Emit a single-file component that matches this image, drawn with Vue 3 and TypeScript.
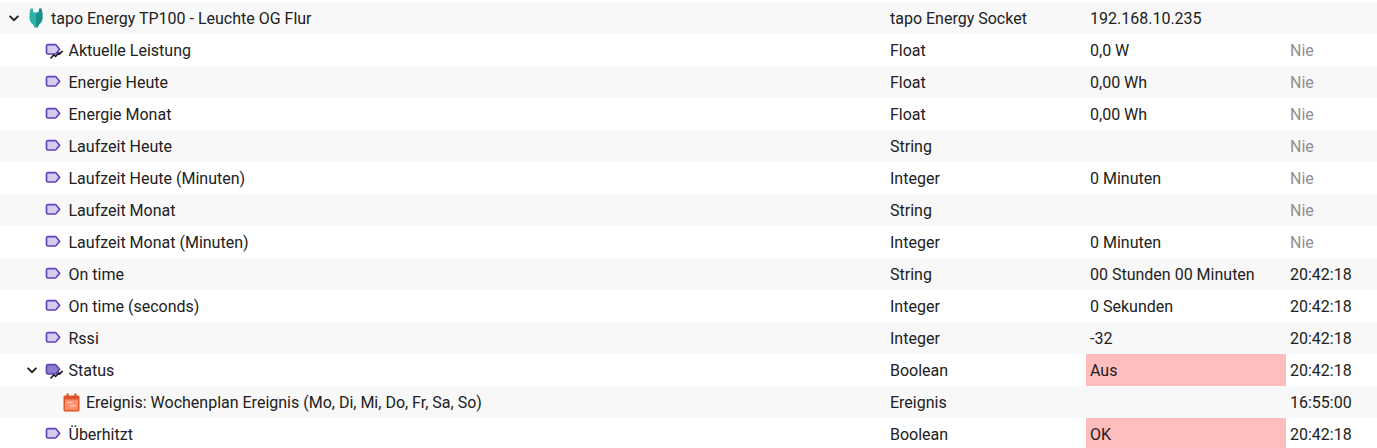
<script setup lang="ts">
interface Row {
  name: string
  type: string
  value: string
  last: string
  depth: number
  icon: 'plug' | 'tag' | 'tagScript' | 'tagScriptDark' | 'calendar'
  chevron?: boolean
  alert?: boolean
  muted?: boolean
}

const rows: Row[] = [
  { name: 'tapo Energy TP100 - Leuchte OG Flur', type: 'tapo Energy Socket', value: '192.168.10.235', last: '', depth: 0, icon: 'plug', chevron: true },
  { name: 'Aktuelle Leistung', type: 'Float', value: '0,0 W', last: 'Nie', depth: 1, icon: 'tagScript', muted: true },
  { name: 'Energie Heute', type: 'Float', value: '0,00 Wh', last: 'Nie', depth: 1, icon: 'tag', muted: true },
  { name: 'Energie Monat', type: 'Float', value: '0,00 Wh', last: 'Nie', depth: 1, icon: 'tag', muted: true },
  { name: 'Laufzeit Heute', type: 'String', value: '', last: 'Nie', depth: 1, icon: 'tag', muted: true },
  { name: 'Laufzeit Heute (Minuten)', type: 'Integer', value: '0 Minuten', last: 'Nie', depth: 1, icon: 'tag', muted: true },
  { name: 'Laufzeit Monat', type: 'String', value: '', last: 'Nie', depth: 1, icon: 'tag', muted: true },
  { name: 'Laufzeit Monat (Minuten)', type: 'Integer', value: '0 Minuten', last: 'Nie', depth: 1, icon: 'tag', muted: true },
  { name: 'On time', type: 'String', value: '00 Stunden 00 Minuten', last: '20:42:18', depth: 1, icon: 'tag' },
  { name: 'On time (seconds)', type: 'Integer', value: '0 Sekunden', last: '20:42:18', depth: 1, icon: 'tag' },
  { name: 'Rssi', type: 'Integer', value: '-32', last: '20:42:18', depth: 1, icon: 'tag' },
  { name: 'Status', type: 'Boolean', value: 'Aus', last: '20:42:18', depth: 1, icon: 'tagScriptDark', chevron: true, alert: true },
  { name: 'Ereignis: Wochenplan Ereignis (Mo, Di, Mi, Do, Fr, Sa, So)', type: 'Ereignis', value: '', last: '16:55:00', depth: 2, icon: 'calendar' },
  { name: 'Überhitzt', type: 'Boolean', value: 'OK', last: '20:42:18', depth: 1, icon: 'tag', alert: true },
]

function indent(depth: number): string {
  return `${6 + depth * 17.5}px`
}
</script>

<template>
  <div class="table">
    <div v-for="(row, i) in rows" :key="i" class="row" :class="{ stripe: i % 2 === 0 }">
      <div class="cell name" :style="{ paddingLeft: indent(row.depth) }">
        <span class="chevron">
          <svg v-if="row.chevron" width="16" height="16" viewBox="0 0 16 16">
            <path d="M3.6 5.8 8 10.2l4.4-4.4" fill="none" stroke="#222" stroke-width="1.9" />
          </svg>
        </span>
        <span class="icon">
          <svg v-if="row.icon === 'plug'" width="16" height="20" viewBox="0 0 16 20">
            <path d="M2.500 0.500 4.800 0.500 5.500 4.500 10.500 4.500 11.200 0.500 13.500 0.500 14.500 5.500V10C14.500 13 13 15 11 16.500L9.500 19.500H6.500L5 16.500C3 15 1.500 13 1.500 10V5.500Z" fill="#2bb3a7" />
            <path d="M8 4.500V19.500H9.500L11 16.500C13 15 14.500 13 14.500 10V5.500L13.500 0.500 11.200 0.500 10.500 4.500Z" fill="#15807a" opacity=".7" />
          </svg>
          <svg v-else-if="row.icon === 'calendar'" width="17" height="19" viewBox="0 0 17 19">
            <rect x="3.500" y="0.500" width="2.200" height="4" fill="#e0562a" />
            <rect x="11.300" y="0.500" width="2.200" height="4" fill="#e0562a" />
            <rect x="0.500" y="2.500" width="16" height="16" rx="1.500" fill="#e0562a" />
            <rect x="2" y="6.500" width="13" height="10.500" fill="#ff8f6b" />
            <rect x="4" y="8.800" width="5.500" height="1.400" fill="#fff" opacity=".55" />
            <rect x="7" y="12" width="6" height="1.400" fill="#fff" opacity=".55" />
          </svg>
          <svg v-else class="tag" width="18" height="16" viewBox="0 0 18 16">
            <path
              d="M2.900 2.600h7.200c.4 0 .7.100 1 .4l3.500 4.200-3.500 4.300c-.3.300-.6.500-1 .5H2.900c-.8 0-1.400-.6-1.400-1.400V4c0-.8.600-1.400 1.400-1.400z"
              :fill="row.icon === 'tagScriptDark' ? '#8e7bd0' : '#d6ccf2'"
              stroke="#5e43b8"
              stroke-width="1.700"
              stroke-linejoin="round"
            />
            <path
              v-if="row.icon !== 'tag'"
              d="M5.500 16.500l3.300-3.600 1.800 1.600 3.200-3.500 1 .9 2.800-3"
              fill="none"
              stroke="#1c1c1c"
              stroke-width="1.600"
            />
          </svg>
        </span>
        <span class="label">{{ row.name }}</span>
      </div>
      <div class="cell">{{ row.type }}</div>
      <div class="cell" :class="{ alert: row.alert }">{{ row.value }}</div>
      <div class="cell" :class="{ muted: row.muted }">{{ row.last }}</div>
    </div>
  </div>
</template>

<style scoped>
.table {
  width: 1377px;
  height: 448px;
  padding-top: 2px;
  box-sizing: border-box;
  overflow: hidden;
  background: #fff;
  color: #212121;
  font-family: Roboto, "Liberation Sans", sans-serif;
  font-size: 16px;
}
.row {
  display: grid;
  grid-template-columns: 886px 200px 200px 91px;
  height: 32px;
}
.stripe {
  background: #f8f8f8;
}
.cell {
  display: flex;
  align-items: center;
  padding: 0 4px;
  white-space: nowrap;
  min-width: 0;
}
.name {
  padding-right: 0;
}
.chevron {
  flex: none;
  width: 16px;
  height: 16px;
  margin-right: 5px;
}
.icon {
  flex: none;
  width: 18px;
  height: 20px;
  margin-right: 6px;
  display: flex;
  align-items: center;
  justify-content: center;
}
.tag {
  overflow: visible;
}
.alert {
  background: #ffbdbd;
}
.muted {
  color: #8f8f8f;
}
</style>

<style>
html,
body {
  margin: 0;
  background: #fff;
}
</style>
